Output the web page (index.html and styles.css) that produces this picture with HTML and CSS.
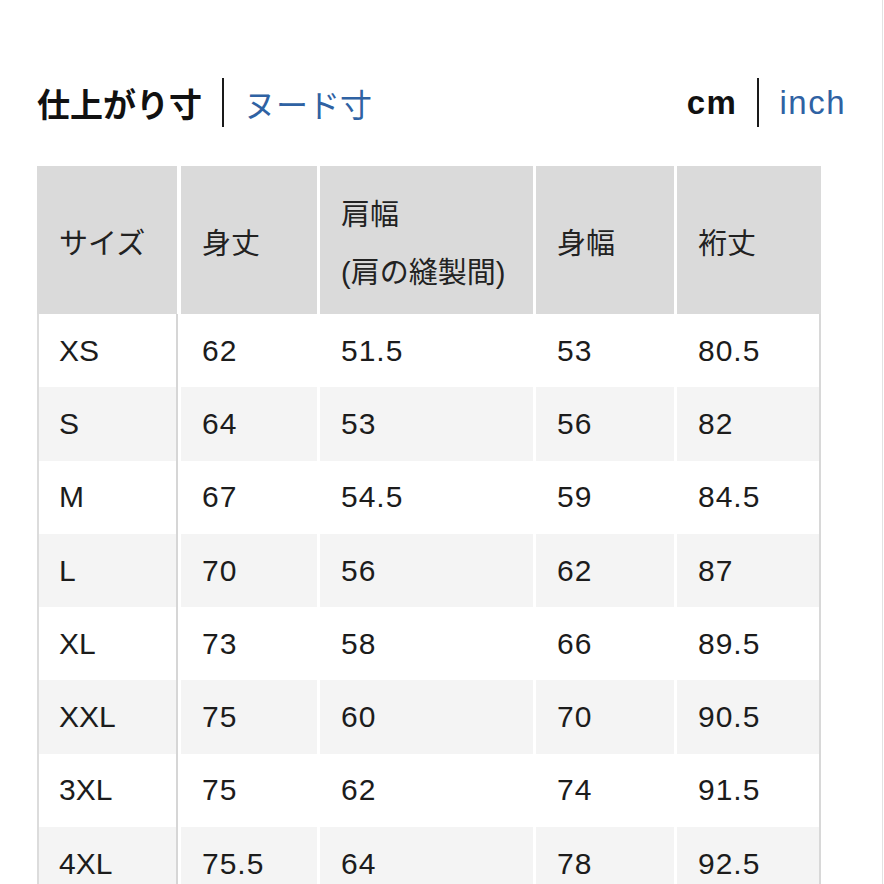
FILE: index.html
```html
<!DOCTYPE html>
<html lang="ja">
<head>
<meta charset="utf-8">
<title>サイズ表</title>
<link rel="stylesheet" href="styles.css">
</head>
<body>
<div class="frame">
  <div class="topbar">
    <div class="toggle">
      <span class="opt active jp title">仕上がり寸</span>
      <span class="sep"></span>
      <span class="opt link jp">ヌード寸</span>
    </div>
    <div class="toggle">
      <span class="opt active unit">cm</span>
      <span class="sep"></span>
      <span class="opt link unit">inch</span>
    </div>
  </div>

  <table class="size-table">
    <colgroup>
      <col class="c1"><col class="c2"><col class="c3"><col class="c4"><col class="c5">
    </colgroup>
    <thead>
      <tr>
        <th>サイズ</th>
        <th>身丈</th>
        <th>肩幅<br>(肩の縫製間)</th>
        <th>身幅</th>
        <th>裄丈</th>
      </tr>
    </thead>
    <tbody>
      <tr><td>XS</td><td>62</td><td>51.5</td><td>53</td><td>80.5</td></tr>
      <tr><td>S</td><td>64</td><td>53</td><td>56</td><td>82</td></tr>
      <tr><td>M</td><td>67</td><td>54.5</td><td>59</td><td>84.5</td></tr>
      <tr><td>L</td><td>70</td><td>56</td><td>62</td><td>87</td></tr>
      <tr><td>XL</td><td>73</td><td>58</td><td>66</td><td>89.5</td></tr>
      <tr><td>XXL</td><td>75</td><td>60</td><td>70</td><td>90.5</td></tr>
      <tr><td>3XL</td><td>75</td><td>62</td><td>74</td><td>91.5</td></tr>
      <tr><td>4XL</td><td>75.5</td><td>64</td><td>78</td><td>92.5</td></tr>
    </tbody>
  </table>
</div>
</body>
</html>
```

FILE: styles.css
```css
html, body {
  margin: 0;
  padding: 0;
  background: #fff;
}

body {
  font-family: "Liberation Sans", "Noto Sans CJK JP", sans-serif;
  color: #1c1c1c;
  overflow: hidden;
}

.frame {
  box-sizing: border-box;
  width: 883px;
  min-height: 884px;
  border-right: 1px solid #e2e2e2;
  padding: 78px 0 0 37px;
}

.topbar {
  display: flex;
  justify-content: space-between;
  align-items: center;
  width: 809px;
  height: 49px;
}

.toggle {
  display: flex;
  align-items: center;
  gap: 20px;
  height: 49px;
}

.sep {
  width: 2px;
  height: 49px;
  background: #1a1a1a;
}

.opt {
  font-size: 32px;
  line-height: 40px;
}

.jp {
  font-family: "Noto Sans CJK JP", sans-serif;
  font-size: 32px;
}

.jp.title {
  font-size: 33px;
}

.unit {
  font-family: "Liberation Sans", "Noto Sans CJK JP", sans-serif;
  font-size: 33px;
  letter-spacing: 1.5px;
}

.active {
  font-weight: 700;
  color: #111;
}

.link {
  color: #2f62a3;
  font-weight: 400;
}

.size-table {
  margin-top: 39px;
  border-collapse: separate;
  border-spacing: 0;
  table-layout: fixed;
  width: 784px;
  font-size: 30px;
}

.c1 { width: 141px; }
.c2 { width: 139px; }
.c3 { width: 216px; }
.c4 { width: 141px; }
.c5 { width: 147px; }

.size-table th,
.size-table td {
  box-sizing: border-box;
  text-align: left;
  vertical-align: middle;
  border-left: 3px solid #fff;
  padding: 0 0 0 21px;
}

.size-table th {
  height: 148px;
  background: #dadada;
  font-weight: 400;
  font-size: 29px;
  color: #222;
  line-height: 58px;
  padding-top: 8px;
  font-family: "Liberation Sans", "Noto Sans CJK JP", sans-serif;
}

.size-table th:first-child {
  border-left: 0;
  border-right: 1px solid #fff;
  padding-left: 22px;
}

.size-table tbody tr {
  height: 73.3px;
}

.size-table td {
  line-height: 36px;
  color: #1c1c1c;
  letter-spacing: 1px;
}

.size-table tbody tr:nth-child(even) td {
  background: #f4f4f4;
}

.size-table td:first-child {
  border-left: 2px solid #dcdcdc;
  border-right: 2px solid #d6d6d6;
  padding-left: 20px;
  letter-spacing: 0;
}

.size-table td:last-child {
  border-right: 2px solid #d8d8d8;
}
```
